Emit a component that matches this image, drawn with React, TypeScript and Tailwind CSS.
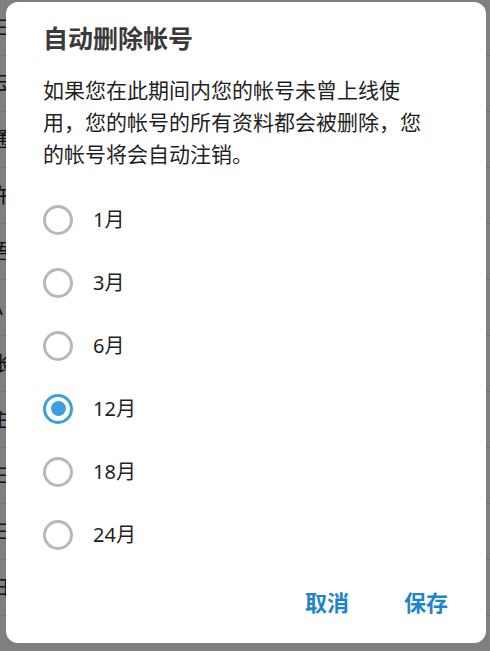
import { useState } from "react";
import { ChevronRight } from "lucide-react";

const options = ["1月", "3月", "6月", "12月", "18月", "24月"];

const bgRows = ["三", "云", "通", "许", "语", "A", "帐", "主", "三", "三", "日"];

function Radio({ checked }: { checked: boolean }) {
  return (
    <span
      className={
        checked
          ? "flex h-[30px] w-[30px] items-center justify-center rounded-full border-[3px] border-[#3d9fe0]"
          : "flex h-[30px] w-[30px] items-center justify-center rounded-full border-[3px] border-[#b8b8b8]"
      }
    >
      {checked && <span className="h-[15px] w-[15px] rounded-full bg-[#3d9fe0]" />}
    </span>
  );
}

export default function App() {
  const [value, setValue] = useState("12月");

  return (
    <div className="relative h-[651px] w-[490px] overflow-hidden bg-white font-['Noto_Sans','Noto_Sans_CJK_SC',sans-serif]">
      {/* page behind the dialog */}
      <div className="flex flex-col">
        {bgRows.map((t, i) => (
          <div key={i} className="flex h-[56px] items-center justify-between border-b border-[#e5e5e5] text-[20px] text-[#222]">
            <span className="-ml-[10px]">{t}</span>
            <ChevronRight className="h-5 w-5 text-[#1d6fb0]" />
          </div>
        ))}
      </div>

      {/* overlay */}
      <div className="absolute inset-0 bg-black/50" />

      {/* dialog */}
      <div className="absolute left-[6px] top-[2px] flex h-[641px] w-[480px] flex-col rounded-[12px] bg-white pl-[37px] pt-[20px]">
        <h2 className="text-[25px] font-bold leading-[32px] text-[#3a3a3a]">自动删除帐号</h2>
        <p className="mt-[20px] text-[21px] leading-[32px] text-[#1f1f1f]">
          如果您在此期间内您的帐号未曾上线使
          <br />
          用，您的帐号的所有资料都会被删除，您
          <br />
          的帐号将会自动注销。
        </p>

        <div className="mt-[18px] flex flex-col">
          {options.map((o) => (
            <label
              key={o}
              className="flex h-[63px] cursor-pointer items-center gap-[20px]"
              onClick={() => setValue(o)}
            >
              <Radio checked={value === o} />
              <span className="text-[20px] text-[#1f1f1f]">{o}</span>
            </label>
          ))}
        </div>

        <div className="mt-[12px] flex h-[48px] items-center justify-end gap-[55px] pr-[38px]">
          <button className="text-[22px] font-bold text-[#1c86cc]">取消</button>
          <button className="text-[22px] font-bold text-[#1c86cc]">保存</button>
        </div>
      </div>
    </div>
  );
}
